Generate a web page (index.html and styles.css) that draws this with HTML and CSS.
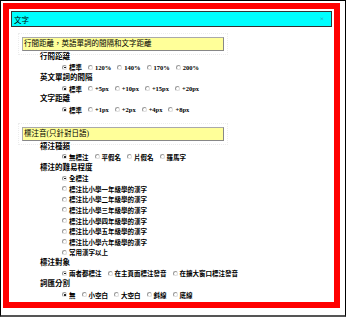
FILE: index.html
```html
<!doctype html>
<html lang="zh-Hant">
<head>
	<meta charset="UTF-8" />
	<title>文字</title>
<link rel="stylesheet" href="styles.css">
</head>
<body>
	<div class="frame">
		<div class="panel">
			<div class="title">
				<span>文字</span>
				<span class="close">×</span>
			</div>
			<div class="content">
				<div class="sec">行間距離，英語單詞的間隔和文字距離</div>
				<p class="label">行間距離</p>
				<div class="row">
					<label class="opt"><i class="radio on"></i>標準</label>
					<label class="opt"><i class="radio"></i>120%</label>
					<label class="opt"><i class="radio"></i>140%</label>
					<label class="opt"><i class="radio"></i>170%</label>
					<label class="opt"><i class="radio"></i>200%</label>
				</div>
				<p class="label">英文單詞的間隔</p>
				<div class="row">
					<label class="opt"><i class="radio on"></i>標準</label>
					<label class="opt"><i class="radio"></i>+5px</label>
					<label class="opt"><i class="radio"></i>+10px</label>
					<label class="opt"><i class="radio"></i>+15px</label>
					<label class="opt"><i class="radio"></i>+20px</label>
				</div>
				<p class="label">文字距離</p>
				<div class="row">
					<label class="opt"><i class="radio on"></i>標準</label>
					<label class="opt"><i class="radio"></i>+1px</label>
					<label class="opt"><i class="radio"></i>+2px</label>
					<label class="opt"><i class="radio"></i>+4px</label>
					<label class="opt"><i class="radio"></i>+8px</label>
				</div>

				<div class="sec sec2">標注音(只針對日語)</div>
				<p class="label">標注種類</p>
				<div class="row">
					<label class="opt"><i class="radio on"></i>無標注</label>
					<label class="opt"><i class="radio"></i>平假名</label>
					<label class="opt"><i class="radio"></i>片假名</label>
					<label class="opt"><i class="radio"></i>羅馬字</label>
				</div>
				<p class="label">標注的難易程度</p>
				<div class="row"><label class="opt"><i class="radio on"></i>全標注</label></div>
				<div class="row"><label class="opt"><i class="radio"></i>標注比小學一年級學的漢字</label></div>
				<div class="row"><label class="opt"><i class="radio"></i>標注比小學二年級學的漢字</label></div>
				<div class="row"><label class="opt"><i class="radio"></i>標注比小學三年級學的漢字</label></div>
				<div class="row"><label class="opt"><i class="radio"></i>標注比小學四年級學的漢字</label></div>
				<div class="row"><label class="opt"><i class="radio"></i>標注比小學五年級學的漢字</label></div>
				<div class="row"><label class="opt"><i class="radio"></i>標注比小學六年級學的漢字</label></div>
				<div class="row"><label class="opt"><i class="radio"></i>常用漢字以上</label></div>
				<p class="label">標注對象</p>
				<div class="row">
					<label class="opt"><i class="radio on"></i>兩者都標注</label>
					<label class="opt"><i class="radio"></i>在主頁面標注發音</label>
					<label class="opt"><i class="radio"></i>在擴大窗口標注發音</label>
				</div>
				<p class="label">詞匯分割</p>
				<div class="row">
					<label class="opt"><i class="radio on"></i>無</label>
					<label class="opt"><i class="radio"></i>小空白</label>
					<label class="opt"><i class="radio"></i>大空白</label>
					<label class="opt"><i class="radio"></i>斜線</label>
					<label class="opt"><i class="radio"></i>底線</label>
				</div>
			</div>
		</div>
	</div>
</body>
</html>
```

FILE: styles.css
```css
*{
	margin: 0;
	padding: 0;
	box-sizing: border-box;
}
body{
	background: #fff;
	font-family: "Liberation Serif", "Noto Sans CJK TC", serif;
	color: #000;
}
.frame{
	width: 346px;
	height: 317px;
	border: 1px solid #000;
	border-bottom: 2px solid #555;
	padding: 2px 5px 0 2px;
}
.panel{
	height: 305px;
	border: 6px solid #f00;
	padding: 2px;
}
.title{
	display: flex;
	justify-content: space-between;
	align-items: center;
	height: 16px;
	background: #0ff;
	border: 1px solid #333;
	padding: 0 7px 0 2px;
	font-size: 7.5px;
}
.close{
	color: #4a7a9a;
	font-size: 7px;
}
.content{
	padding-left: 11px;
}
.sec{
	width: 202px;
	height: 14px;
	margin-top: 10px;
	line-height: 12px;
	padding-left: 1px;
	background: #ffff99;
	border: 1px solid #aaa;
	border-right-color: #888;
	border-bottom-color: #888;
	font-size: 7.5px;
	outline: 1px dotted #ececec;
	outline-offset: 3px;
}
.sec2{
	margin-top: 12px;
}
.label{
	margin-left: 18px;
	height: 10.6px;
	padding-top: 1px;
	line-height: 10px;
	font-size: 7.5px;
	font-weight: bold;
}
.row{
	display: flex;
	align-items: center;
	margin-left: 40px;
	height: 10.6px;
	padding-top: 1px;
	font-size: 6.5px;
	font-weight: bold;
}
.opt{
	display: flex;
	align-items: center;
	margin-right: 6px;
}
.radio{
	display: inline-block;
	width: 5px;
	height: 5px;
	margin-right: 2px;
	border-radius: 50%;
	border: 1px solid #999;
	border-right-color: #ddd;
	border-bottom-color: #ddd;
	background: #fff;
	position: relative;
}
.radio.on::after{
	content: "";
	position: absolute;
	left: 1px;
	top: 1px;
	width: 1.5px;
	height: 1.5px;
	border-radius: 50%;
	background: #000;
}
```
